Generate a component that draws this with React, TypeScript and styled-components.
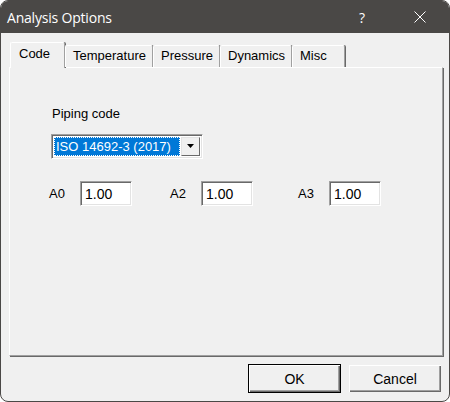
import styled, { createGlobalStyle } from "styled-components";

const GlobalStyle = createGlobalStyle`
  html, body {
    margin: 0;
    padding: 0;
    background: #ffffff;
  }
  * {
    box-sizing: border-box;
  }
`;

const Window = styled.div`
  width: 450px;
  height: 402px;
  display: flex;
  flex-direction: column;
  border: 1px solid #4a4846;
  border-radius: 8px;
  overflow: hidden;
  background: #f0f0f0;
  font-family: "Liberation Sans", Arial, sans-serif;
  font-size: 13px;
  color: #000;
`;

const TitleBar = styled.div`
  height: 32px;
  flex-shrink: 0;
  display: flex;
  align-items: center;
  background: #4a4846;
  color: #ffffff;
  padding-left: 6px;
`;

const Title = styled.div`
  flex: 1;
  font-family: "Open Sans", "Noto Sans", sans-serif;
  font-size: 14px;
  letter-spacing: -0.2px;
`;

const TitleButton = styled.div`
  width: 58px;
  height: 32px;
  display: flex;
  align-items: center;
  justify-content: center;
  font-family: "Open Sans", "Noto Sans", sans-serif;
  font-size: 14px;
`;

const Body = styled.div`
  flex: 1;
  display: flex;
  flex-direction: column;
  padding: 9px 6px 0 8px;
`;

const TabStrip = styled.div`
  height: 25px;
  display: flex;
  align-items: flex-end;
  padding-left: 1px;
  position: relative;
  z-index: 1;
`;

const Tab = styled.div<{ $active?: boolean; $width: number }>`
  width: ${(p) => p.$width}px;
  height: ${(p) => (p.$active ? 26 : 22)}px;
  margin-bottom: ${(p) => (p.$active ? -1 : 0)}px;
  background: #f0f0f0;
  border-top: 1px solid #ffffff;
  border-left: 1px solid #ffffff;
  border-right: 1px solid #a0a0a0;
  box-shadow: 1px 0 0 #696969;
  border-top-left-radius: 2px;
  border-top-right-radius: 2px;
  padding: ${(p) => (p.$active ? "3px 0 0 8px" : "2px 0 0 7px")};
  line-height: 16px;
  white-space: nowrap;
`;

const Panel = styled.div`
  height: 289px;
  border-top: 1px solid #ffffff;
  border-left: 1px solid #ffffff;
  border-right: 1px solid #a0a0a0;
  border-bottom: 1px solid #a0a0a0;
  box-shadow: 1px 1px 0 #696969;
  padding: 38px 0 0 41px;
  display: flex;
  flex-direction: column;
`;

const FieldLabel = styled.div`
  padding-left: 1px;
  line-height: 16px;
`;

const Combo = styled.div`
  margin-top: 12px;
  width: 152px;
  height: 25px;
  display: flex;
  align-items: center;
  padding: 2px;
  background: #ffffff;
  border-top: 1px solid #a0a0a0;
  border-left: 1px solid #a0a0a0;
  border-right: 1px solid #ffffff;
  border-bottom: 1px solid #ffffff;
  box-shadow: inset 1px 1px 0 #696969, inset -1px -1px 0 #e3e3e3;
`;

const ComboValue = styled.div`
  flex: 1;
  height: 19px;
  line-height: 19px;
  padding-left: 2px;
  background: #0078d7;
  color: #ffffff;
  outline: 1px dotted #ffffff;
  outline-offset: -1px;
  margin-right: 1px;
`;

const ComboButton = styled.div`
  width: 19px;
  height: 19px;
  background: #f0f0f0;
  border-top: 1px solid #e3e3e3;
  border-left: 1px solid #e3e3e3;
  border-right: 1px solid #696969;
  border-bottom: 1px solid #696969;
  display: flex;
  align-items: center;
  justify-content: center;
`;

const CoefRow = styled.div`
  margin: 22px 0 0 -2px;
  display: flex;
  align-items: center;
`;

const Coef = styled.div<{ $width: number }>`
  width: ${(p) => p.$width}px;
  display: flex;
  align-items: center;
`;

const CoefLabel = styled.div`
  width: 31px;
  line-height: 16px;
`;

const NumberBox = styled.div`
  width: 52px;
  height: 25px;
  background: #ffffff;
  border-top: 1px solid #a0a0a0;
  border-left: 1px solid #a0a0a0;
  border-right: 1px solid #ffffff;
  border-bottom: 1px solid #ffffff;
  box-shadow: inset 1px 1px 0 #696969, inset -1px -1px 0 #e3e3e3;
  padding: 4px 0 0 4px;
  line-height: 16px;
  font-size: 14px;
`;

const Footer = styled.div`
  display: flex;
  justify-content: flex-end;
  gap: 7px;
  padding: 8px 1px 0 0;
`;

const Button = styled.div<{ $default?: boolean }>`
  width: ${(p) => (p.$default ? 93 : 94)}px;
  height: 29px;
  display: flex;
  align-items: center;
  justify-content: center;
  background: #f0f0f0;
  border: 1px solid ${(p) => (p.$default ? "#000000" : "transparent")};
  box-shadow: inset 1px 1px 0 #ffffff, inset -1px -1px 0 #696969,
    inset -2px -2px 0 #a0a0a0;
  font-size: 14px;
`;

const tabs = [
  { name: "Code", width: 55 },
  { name: "Temperature", width: 88 },
  { name: "Pressure", width: 67 },
  { name: "Dynamics", width: 72 },
  { name: "Misc", width: 53 },
];

const coefs = [
  { name: "A0", width: 121 },
  { name: "A2", width: 128 },
  { name: "A3", width: 83 },
];

export default function App() {
  return (
    <>
      <GlobalStyle />
      <Window>
        <TitleBar>
          <Title>Analysis Options</Title>
          <TitleButton>?</TitleButton>
          <TitleButton>
            <svg width="12" height="12" viewBox="0 0 12 12">
              <path d="M0.5 0.5 L11.5 11.5 M11.5 0.5 L0.5 11.5" stroke="#ffffff" strokeWidth="1" />
            </svg>
          </TitleButton>
        </TitleBar>
        <Body>
          <TabStrip>
            {tabs.map((t, i) => (
              <Tab key={t.name} $active={i === 0} $width={t.width}>
                {t.name}
              </Tab>
            ))}
          </TabStrip>
          <Panel>
            <FieldLabel>Piping code</FieldLabel>
            <Combo>
              <ComboValue>ISO 14692-3 (2017)</ComboValue>
              <ComboButton>
                <svg width="8" height="5" viewBox="0 0 8 5">
                  <path d="M0 0 H7 L3.5 4 Z" fill="#000000" />
                </svg>
              </ComboButton>
            </Combo>
            <CoefRow>
              {coefs.map((c) => (
                <Coef key={c.name} $width={c.width}>
                  <CoefLabel>{c.name}</CoefLabel>
                  <NumberBox>1.00</NumberBox>
                </Coef>
              ))}
            </CoefRow>
          </Panel>
          <Footer>
            <Button $default>OK</Button>
            <Button>Cancel</Button>
          </Footer>
        </Body>
      </Window>
    </>
  );
}
